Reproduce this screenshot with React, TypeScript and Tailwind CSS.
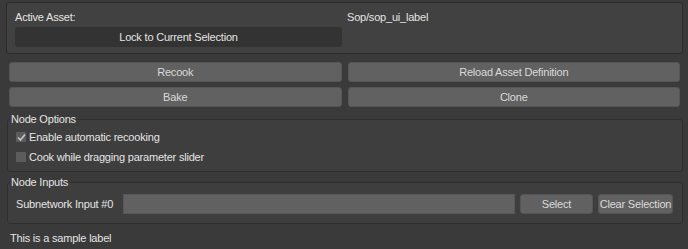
import React from 'react';

function Button({ label, className = '' }: { label: string; className?: string }) {
  return (
    <button
      className={`h-[20px] rounded-[3px] border border-[#555555] bg-[#616161] text-[#dadada] flex items-center justify-center ${className}`}
    >
      {label}
    </button>
  );
}

function Check({ checked, label }: { checked?: boolean; label: string }) {
  return (
    <div className="h-[20px] flex items-center">
      <span className="ml-[8px] w-[10px] h-[10px] bg-[#5c5c5c] flex items-center justify-center">
        {checked && (
          <svg width="9" height="9" viewBox="0 0 9 9">
            <path d="M1 4.5 L3.5 7 L8 1.5" stroke="#c8c8c8" strokeWidth="1.6" fill="none" />
          </svg>
        )}
      </span>
      <span className="ml-[3px]">{label}</span>
    </div>
  );
}

function Group({ title, children, className = '' }: { title: string; children: React.ReactNode; className?: string }) {
  return (
    <fieldset className={`ml-[7px] mr-[5px] border border-[#2e2e2e] rounded-[3px] bg-[#3e3e3e] ${className}`}>
      <legend className="ml-[2px] px-[1px] leading-[14px]">{title}</legend>
      {children}
    </fieldset>
  );
}

export default function App() {
  return (
    <div
      className="w-[688px] h-[249px] overflow-hidden bg-[#3a3a3a] text-[#e4e4e4] text-[11px] tracking-[-0.2px] leading-[14px]"
      style={{ fontFamily: '"Liberation Sans", Arial, sans-serif' }}
    >
      <div className="mt-[2px] mx-[5px] ml-[6px] h-[52px] border border-[#2c2c2c] rounded-[3px] bg-[#414141] flex">
        <div className="w-[340px] pl-[8px] pr-[5px] pt-[7px]">
          <div className="pl-[-1px]">Active Asset:</div>
          <button className="mt-[3px] w-[327px] h-[20px] rounded-[3px] bg-[#333333] text-[#e4e4e4] flex items-center justify-center">
            Lock to Current Selection
          </button>
        </div>
        <div className="pt-[7px]">Sop/sop_ui_label</div>
      </div>

      <div className="mt-[8px] pl-[9px] pr-[8px] grid grid-cols-2 gap-x-[6px] gap-y-[5px]">
        <Button label="Recook" />
        <Button label="Reload Asset Definition" />
        <Button label="Bake" />
        <Button label="Clone" />
      </div>

      <Group title="Node Options" className="mt-[5px] pt-[1px] pb-[4px]">
        <Check checked label="Enable automatic recooking" />
        <Check label="Cook while dragging parameter slider" />
      </Group>

      <Group title="Node Inputs" className="mt-[3px] pt-[5px] pb-[9px]">
        <div className="flex items-center h-[20px] pl-[8px] pr-[9px]">
          <span className="w-[107px]">Subnetwork Input #0</span>
          <div className="w-[392px] h-[20px] bg-[#616161] border border-[#585858]" />
          <Button label="Select" className="ml-[5px] w-[73px]" />
          <Button label="Clear Selection" className="ml-[5px] w-[75px]" />
        </div>
      </Group>

      <div className="mt-[7px] pl-[10px]">This is a sample label</div>
    </div>
  );
}
